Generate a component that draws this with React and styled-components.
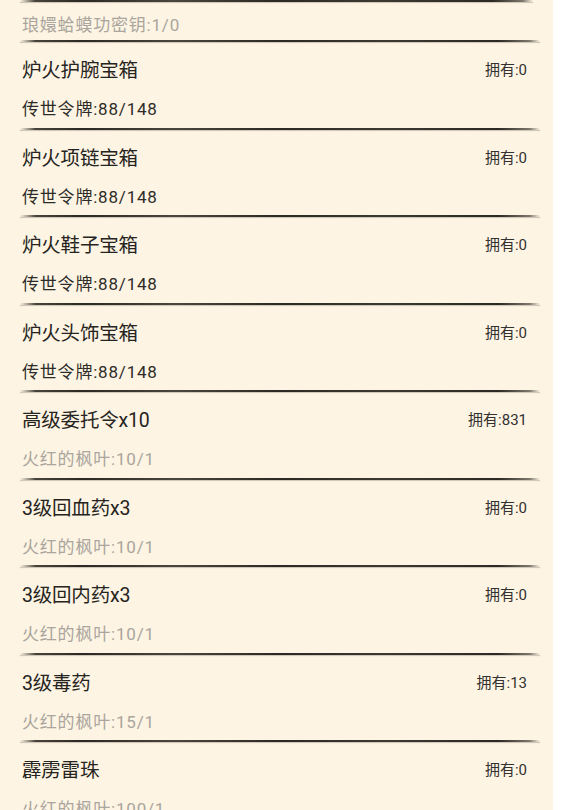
import React from "react"
import styled, { createGlobalStyle } from "styled-components"

const GlobalStyle = createGlobalStyle`
  html, body {
    margin: 0;
    padding: 0;
    background: #ffffff;
    overflow: hidden;
  }
  body {
    font-family: Roboto, "Noto Sans CJK SC", "Noto Sans", sans-serif;
  }
`

const Panel = styled.div`
  width: 553px;
  height: 810px;
  background: #fdf4e3;
  overflow: hidden;
`

const Divider = styled.div`
  flex: none;
  margin: 0 ${(p) => p.$right || 13}px 0 20px;
  height: 2px;
  background: linear-gradient(
    90deg,
    rgba(40, 36, 30, 0) 0%,
    rgba(40, 36, 30, 0.85) 3%,
    #2c2823 12%,
    #4a453e 30%,
    #2c2823 50%,
    #3c3832 70%,
    #2c2823 92%,
    rgba(40, 36, 30, 0.6) 98%,
    rgba(40, 36, 30, 0) 100%
  );
  box-shadow: 0 1px 1px rgba(60, 50, 40, 0.25);
`

const Item = styled.div`
  display: flex;
  flex-direction: column;
  height: 87.5px;
`

const TitleRow = styled.div`
  display: flex;
  align-items: center;
  justify-content: space-between;
  height: 53px;
  padding: 0 26px 0 22px;
`

const Title = styled.span`
  font-size: 19.5px;
  color: #262421;
  letter-spacing: -0.2px;
`

const Owned = styled.span`
  font-size: 15px;
  color: #333130;
`

const Cost = styled.div`
  display: flex;
  align-items: center;
  height: ${(p) => p.$height || 25}px;
  padding: ${(p) => p.$top || 0}px 0 0 22px;
  font-size: 17px;
  letter-spacing: 0.8px;
  color: ${(p) => (p.$muted ? "#aaa59d" : "#2e2c29")};
`

const items = [
  { name: "炉火护腕宝箱", owned: 0, cost: "传世令牌:88/148" },
  { name: "炉火项链宝箱", owned: 0, cost: "传世令牌:88/148" },
  { name: "炉火鞋子宝箱", owned: 0, cost: "传世令牌:88/148" },
  { name: "炉火头饰宝箱", owned: 0, cost: "传世令牌:88/148" },
  { name: "高级委托令x10", owned: 831, cost: "火红的枫叶:10/1", muted: true },
  { name: "3级回血药x3", owned: 0, cost: "火红的枫叶:10/1", muted: true },
  { name: "3级回内药x3", owned: 0, cost: "火红的枫叶:10/1", muted: true },
  { name: "3级毒药", owned: 13, cost: "火红的枫叶:15/1", muted: true },
  { name: "霹雳雷珠", owned: 0, cost: "火红的枫叶:100/1", muted: true },
]

const App = () => {
  return (
    <>
      <GlobalStyle />
      <Panel>
        <Divider $right={20} />
        <Cost $muted $height={34} $top={4}>琅嬛蛤蟆功密钥:1/0</Cost>
        {items.map((it, i) => (
          <Item key={i}>
            <Divider />
            <TitleRow>
              <Title>{it.name}</Title>
              <Owned>拥有:{it.owned}</Owned>
            </TitleRow>
            <Cost $muted={it.muted}>{it.cost}</Cost>
          </Item>
        ))}
      </Panel>
    </>
  )
}

export default App
